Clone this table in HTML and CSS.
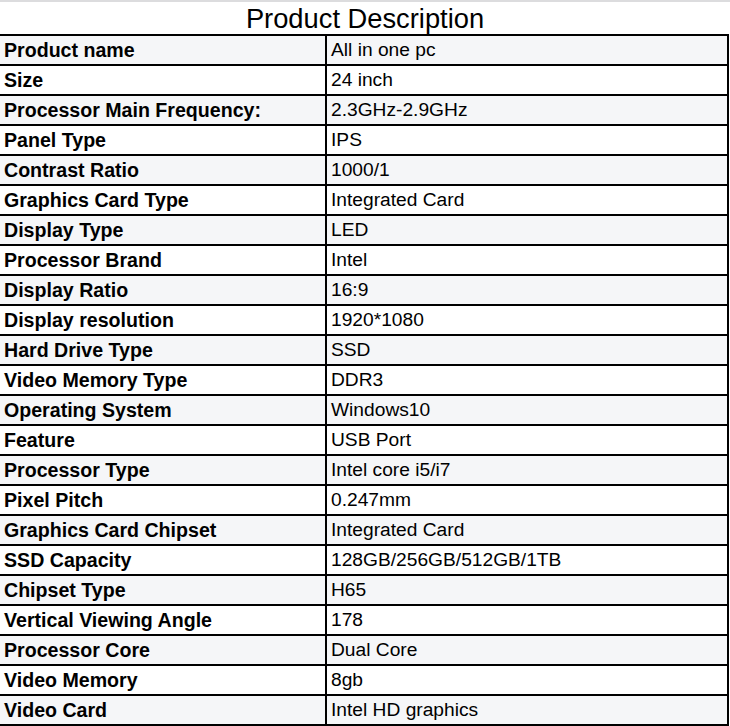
FILE: index.html
```html
<!DOCTYPE html>
<html>
<head>
<meta charset="utf-8">
<link rel="stylesheet" href="styles.css">
</head>
<body>
<div class="sheet">
  <div class="title">Product Description</div>
  <table class="specs">
    <tbody>
      <tr><th>Product name</th><td>All in one pc</td></tr>
      <tr><th>Size</th><td>24 inch</td></tr>
      <tr><th>Processor Main Frequency:</th><td>2.3GHz-2.9GHz</td></tr>
      <tr><th>Panel Type</th><td>IPS</td></tr>
      <tr><th>Contrast Ratio</th><td>1000/1</td></tr>
      <tr><th>Graphics Card Type</th><td>Integrated Card</td></tr>
      <tr><th>Display Type</th><td>LED</td></tr>
      <tr><th>Processor Brand</th><td>Intel</td></tr>
      <tr><th>Display Ratio</th><td>16:9</td></tr>
      <tr><th>Display resolution</th><td>1920*1080</td></tr>
      <tr><th>Hard Drive Type</th><td>SSD</td></tr>
      <tr><th>Video Memory Type</th><td>DDR3</td></tr>
      <tr><th>Operating System</th><td>Windows10</td></tr>
      <tr><th>Feature</th><td>USB Port</td></tr>
      <tr><th>Processor Type</th><td>Intel core i5/i7</td></tr>
      <tr><th>Pixel Pitch</th><td>0.247mm</td></tr>
      <tr><th>Graphics Card Chipset</th><td>Integrated Card</td></tr>
      <tr><th>SSD Capacity</th><td>128GB/256GB/512GB/1TB</td></tr>
      <tr><th>Chipset Type</th><td>H65</td></tr>
      <tr><th>Vertical Viewing Angle</th><td>178</td></tr>
      <tr><th>Processor Core</th><td>Dual Core</td></tr>
      <tr><th>Video Memory</th><td>8gb</td></tr>
      <tr><th>Video Card</th><td>Intel HD graphics</td></tr>
    </tbody>
  </table>
</div>
</body>
</html>
```
FILE: styles.css
```css
html, body {
  margin: 0;
  padding: 0;
  background: #ffffff;
}
body {
  font-family: "Liberation Sans", Arial, sans-serif;
  color: #000;
}
.sheet {
  width: 730px;
  border-top: 2px solid #dcdcde;
}
.title {
  height: 32px;
  line-height: 34px;
  font-size: 27.3px;
  text-align: center;
}
.specs {
  width: 729px;
  border-collapse: collapse;
  table-layout: fixed;
}
.specs th, .specs td {
  height: 30px;
  padding: 0 0 0 4px;
  border-top: 2px solid #000;
  border-bottom: 2px solid #000;
  border-right: 2px solid #000;
  text-align: left;
  vertical-align: middle;
  font-size: 19.2px;
  white-space: nowrap;
  box-sizing: border-box;
}
.specs th {
  width: 326px;
  font-weight: bold;
  font-size: 19.6px;
}
.specs tr:nth-child(odd) {
  background: #f5f6f8;
}
```
